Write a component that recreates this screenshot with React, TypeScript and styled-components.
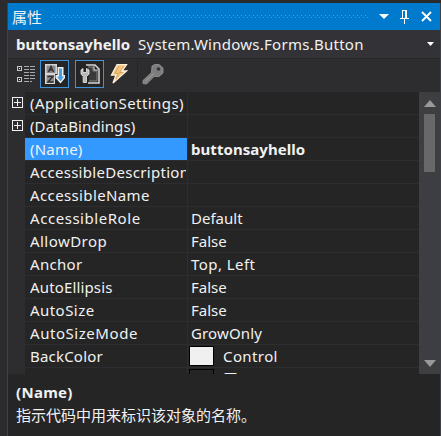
import React from "react";
import styled, { createGlobalStyle } from "styled-components";

const Global = createGlobalStyle`
  * { box-sizing: border-box; }
  html, body { margin: 0; padding: 0; background: #2d2d30; overflow: hidden; }
  svg { display: block; }
`;

const Desk = styled.div`
  width: 441px;
  height: 436px;
  padding: 3px 0 0 7px;
  background: #2b2b2e;
  font-family: "Noto Sans", "Noto Sans CJK SC", sans-serif;
  font-size: 15px;
  color: #f1f1f1;
  overflow: hidden;
  white-space: nowrap;
`;

const Panel = styled.section`
  height: 433px;
  display: flex;
  flex-direction: column;
  border-left: 1px solid #3f3f46;
  border-right: 1px solid #3f3f46;
  background: #2d2d30;
`;

const TitleBar = styled.header`
  height: 27px;
  flex: none;
  display: flex;
  align-items: center;
  padding: 0 0 0 4px;
  background: #007acc;
`;

const Title = styled.span`
  font-family: "Noto Sans CJK SC", sans-serif;
  font-size: 15px;
  line-height: 27px;
  width: 39px;
`;

const Grip = styled.svg`
  flex: none;
  margin-right: 11px;
`;

const WindowButtons = styled.div`
  display: flex;
  align-items: center;
  gap: 11px;
`;

const ObjectBar = styled.div`
  height: 29px;
  flex: none;
  display: flex;
  align-items: center;
  padding: 0 6px 0 8px;
  background: #333337;
  border-bottom: 1px solid #27272a;
`;

const ObjectName = styled.b`
  width: 122px;
  letter-spacing: 0.05px;
`;

const ObjectType = styled.span`
  flex: 1;
  letter-spacing: 0.26px;
`;

const Toolbar = styled.div`
  height: 33px;
  flex: none;
  display: flex;
  align-items: center;
  padding: 0 0 3px 3px;
  background: #2d2d30;
`;

const Tool = styled.div<{ $on?: boolean; $gap?: number }>`
  width: 29px;
  height: 28px;
  margin-right: ${(p) => p.$gap ?? 0}px;
  display: flex;
  align-items: center;
  justify-content: center;
  border: 1px solid ${(p) => (p.$on ? "#3f91d8" : "transparent")};
  background: ${(p) => (p.$on ? "#252526" : "transparent")};
`;

const Divider = styled.div`
  width: 1px;
  height: 26px;
  background: #252528;
`;

const GridArea = styled.div`
  height: 282px;
  flex: none;
  display: flex;
  overflow: hidden;
`;

const Rows = styled.div`
  flex: 1;
  min-width: 0;
  background: #252526;
`;

const Row = styled.div`
  height: 23px;
  display: grid;
  grid-template-columns: 17px 162px 1fr;
  line-height: 22px;
`;

const Margin = styled.div`
  display: flex;
  padding: 5px 0 0 4px;
  background: #2d2d30;
`;

const Key = styled.div<{ $selected?: boolean; $tracking: number }>`
  height: 22px;
  margin-bottom: 1px;
  padding-left: 5px;
  overflow: hidden;
  letter-spacing: ${(p) => p.$tracking}px;
  background: ${(p) => (p.$selected ? "#3399ff" : "transparent")};
  box-shadow: 0 1px 0 #2d2d30;
`;

const KeyText = styled.div`
  width: 156px;
  overflow: hidden;
`;

const Value = styled.div<{ $bold?: boolean; $tracking: number }>`
  height: 23px;
  display: flex;
  align-items: flex-start;
  padding-left: 3px;
  border-left: 1px solid #2d2d30;
  border-bottom: 1px solid #2d2d30;
  font-weight: ${(p) => (p.$bold ? 700 : 400)};
  letter-spacing: ${(p) => p.$tracking}px;
`;

const Swatch = styled.span<{ $color: string }>`
  width: 25px;
  height: 20px;
  margin: 1px 9px 0 -2px;
  border: 1px solid #000;
  background: ${(p) => p.$color};
`;

const Scrollbar = styled.div`
  width: 21px;
  display: flex;
  flex-direction: column;
  align-items: center;
  padding: 8px 0 7px;
  background: #3e3e42;
`;

const Thumb = styled.div`
  width: 11px;
  height: 58px;
  margin: 7px 0 auto;
  background: #686868;
`;

const Help = styled.footer`
  flex: 1;
  padding: 7px 0 0 8px;
  background: #252526;
`;

const HelpTitle = styled.b`
  display: block;
  line-height: 22px;
  letter-spacing: 0.3px;
`;

const HelpText = styled.div`
  font-family: "Noto Sans CJK SC", sans-serif;
  font-size: 15px;
  line-height: 24px;
`;

type Item = {
  name: string;
  value?: string;
  group?: boolean;
  selected?: boolean;
  swatch?: string;
  tracking?: number;
  valueTracking?: number;
};

const items: Item[] = [
  { name: "(ApplicationSettings)", group: true, tracking: 0.42 },
  { name: "(DataBindings)", group: true, tracking: 0.1 },
  { name: "(Name)", value: "buttonsayhello", selected: true, tracking: 0.2, valueTracking: 0.05 },
  { name: "AccessibleDescription", tracking: 0.3 },
  { name: "AccessibleName", tracking: 0.38 },
  { name: "AccessibleRole", value: "Default", tracking: 0.55 },
  { name: "AllowDrop", value: "False", tracking: 0.45 },
  { name: "Anchor", value: "Top, Left", tracking: 0.3, valueTracking: 0.45 },
  { name: "AutoEllipsis", value: "False", tracking: 0.15 },
  { name: "AutoSize", value: "False", tracking: 0.45 },
  { name: "AutoSizeMode", value: "GrowOnly", tracking: 0.55, valueTracking: 0.15 },
  { name: "BackColor", value: "Control", swatch: "#f0f0f0", tracking: 0.2, valueTracking: 0.4 },
  { name: "BackgroundImage", value: "无", swatch: "#252526", tracking: 0.2 },
];

const Arrow = ({ w, h, up, color = "#fff" }: { w: number; h: number; up?: boolean; color?: string }) => (
  <svg width={w} height={h} viewBox="0 0 10 5" preserveAspectRatio="none">
    <path d={up ? "M0 5H10L5 0Z" : "M0 0H10L5 5Z"} fill={color} />
  </svg>
);

const Plus = () => (
  <svg width="12" height="12" shapeRendering="crispEdges">
    <path d="M.5 .5H10.5V10.5H.5ZM2 5.5H9M5.5 2V9" fill="none" stroke="#f1f1f1" />
  </svg>
);

export default function App() {
  return (
    <>
      <Global />
      <Desk>
        <Panel>
          <TitleBar>
            <Title>属性</Title>
            <Grip width="317" height="7">
              <defs>
                <pattern id="grip" width="4" height="4" patternUnits="userSpaceOnUse">
                  <path d="M0 0h1v1H0zM2 2h1v1H2z" fill="#48a0dc" />
                </pattern>
              </defs>
              <rect width="317" height="5" y="1" fill="url(#grip)" />
            </Grip>
            <WindowButtons>
              <Arrow w={10} h={5} />
              <svg width="9" height="14" viewBox="0 0 9 14" shapeRendering="crispEdges">
                <path d="M2.5 8V.5H6.5V8M0 8.5H9M4.5 9V14M5.5 1V8" fill="none" stroke="#fff" />
              </svg>
              <svg width="13" height="11" viewBox="-1 0 13 11">
                <path d="M1 1L10 10M10 1L1 10" stroke="#fff" strokeWidth="1.9" />
              </svg>
            </WindowButtons>
          </TitleBar>
          <ObjectBar>
            <ObjectName>buttonsayhello</ObjectName>
            <ObjectType>System.Windows.Forms.Button</ObjectType>
            <Arrow w={7} h={4} />
          </ObjectBar>
          <Toolbar>
            <Tool>
              <svg width="18" height="18" shapeRendering="crispEdges">
                <path d="M.5 1.5h4v4h-4zM.5 12.5h4v4h-4z" fill="none" stroke="#c5c5c5" />
                <path d="M2 3h1v1H2zM2 14h1v1H2z" fill="#eee" />
                <path d="M7 1.5h11M7 4.5h11M7 7.5h11M7 10.5h11M7 13.5h11M7 16.5h8" stroke="#aaa" strokeDasharray="5 1" />
              </svg>
            </Tool>
            <Tool $on $gap={6}>
              <svg width="20" height="20" viewBox="0 0 20 20">
                <path d="M0 0H12V10H10V20H0Z" fill="#d5d5d5" />
                <path d="M1.5 1.5H10.5V9H1.5ZM1.5 11H9V19H1.5Z" fill="#8b8b8b" />
                <path d="M3.5 8L6 2.5L8.5 8M4.5 6H7.5M2.5 12.5H8L3 18H8.5" fill="none" stroke="#303032" strokeWidth="1.4" />
                <path d="M12.5 3H18.5V11H20V14L15.5 19.5L10.5 14V11H12.5Z" fill="#eee" />
                <path d="M14 4.5H17V12.5H19L15.5 17.5L12 12.5H14Z" fill="#4aa3df" />
              </svg>
            </Tool>
            <Tool $on>
              <svg width="20" height="20" viewBox="0 0 20 20">
                <path d="M6 1H15L19 5V19H8" fill="#252526" stroke="#d8d8d8" strokeWidth="1.5" />
                <path d="M8 3H13V7H17V17H9" fill="#3a3a3c" stroke="#858585" />
                <path d="M14 2V6H18" fill="none" stroke="#d8d8d8" />
                <path d="M1 6L3 4.5V8.5H6.5V4.5L9 6V10L6.5 12.5V18.5H3.2V12.5L1 10Z" fill="#b8b8b8" stroke="#eee" strokeWidth=".8" />
              </svg>
            </Tool>
            <Tool $gap={4}>
              <svg width="18" height="20" viewBox="0 0 18 20">
                <path d="M7 .7H16.5L12 7H16.5L3 19L6 11H1.5Z" fill="#f3c582" stroke="#fff0da" strokeWidth="1.3" />
                <path d="M9 2L5 9.5H8.5L6 15M14 2L9.5 8.5H13" fill="none" stroke="#d79b55" strokeWidth=".8" />
              </svg>
            </Tool>
            <Divider />
            <Tool>
              <svg width="22" height="21" viewBox="0 0 22 21">
                <path d="M10 2L13 .5H17L21 4V9L17 12.5H12L4.5 20L1 19.5V16.5L9.5 8.5Z" fill="#7d7d7d" stroke="#999" strokeWidth=".8" />
                <path d="M3 17.5L12 9.5" stroke="#a5a5a5" />
                <circle cx="16.5" cy="5" r="1.8" fill="#333" />
              </svg>
            </Tool>
          </Toolbar>
          <GridArea>
            <Rows>
              {items.map((it) => (
                <Row key={it.name}>
                  <Margin>{it.group && <Plus />}</Margin>
                  <Key $selected={it.selected} $tracking={it.tracking ?? 0}>
                    <KeyText>{it.name}</KeyText>
                  </Key>
                  <Value $bold={it.selected} $tracking={it.valueTracking ?? 0}>
                    {it.swatch && <Swatch $color={it.swatch} />}
                    {it.value}
                  </Value>
                </Row>
              ))}
            </Rows>
            <Scrollbar>
              <Arrow w={12} h={7} up color="#999" />
              <Thumb />
              <Arrow w={12} h={7} color="#999" />
            </Scrollbar>
          </GridArea>
          <Help>
            <HelpTitle>(Name)</HelpTitle>
            <HelpText>指示代码中用来标识该对象的名称。</HelpText>
          </Help>
        </Panel>
      </Desk>
    </>
  );
}
